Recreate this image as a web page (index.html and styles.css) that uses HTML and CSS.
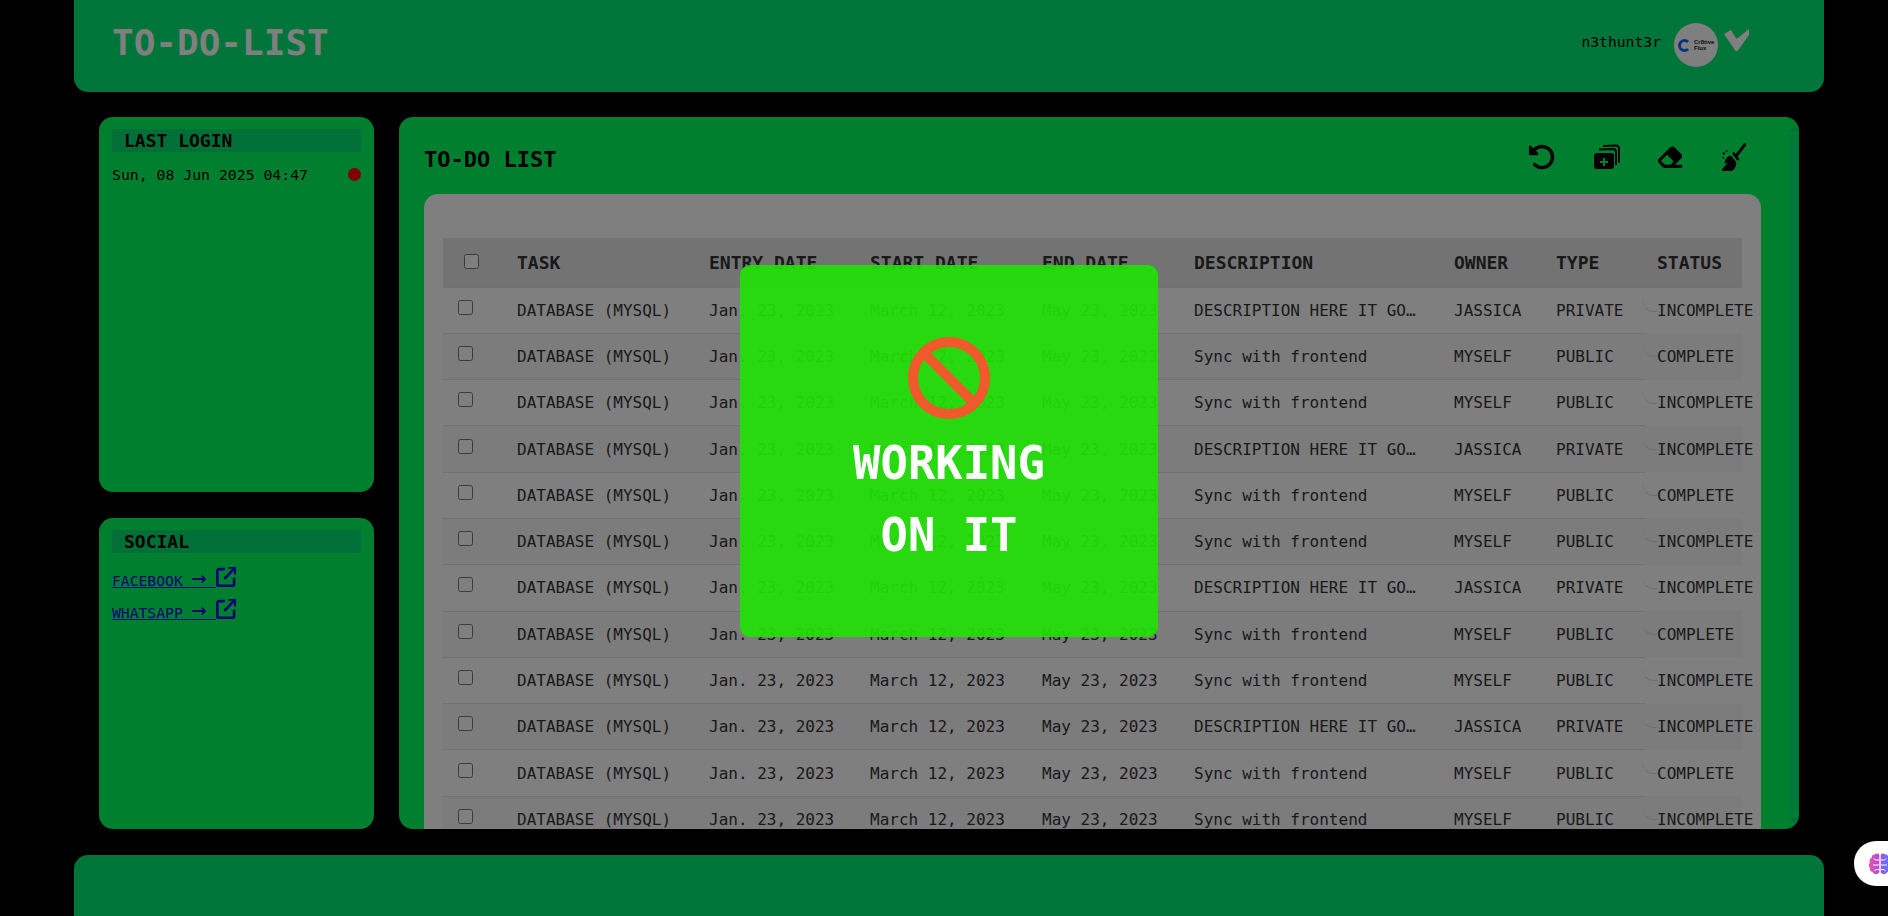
FILE: index.html
```html
<!DOCTYPE html>
<html lang="en">
<head>
    <meta charset="UTF-8">
    <meta name="viewport" content="width=device-width, initial-scale=1.0">
    <title>To-Do-List</title>
    <link rel="stylesheet" href="styles.css">
</head>
<body>

    <header class="topbar">
        <h1>TO-DO-LIST</h1>
        <div class="user">
            <span class="username">n3thunt3r</span>
            <div class="avatar">
                <span class="avatar-mark"></span>
                <span class="avatar-name">Cr8tive<br>Flux</span>
            </div>
            <svg class="chevron" viewBox="0 0 25 22"><polygon points="0,5 7,1 12.5,10 25,0 25,6 13.5,22 11.5,22"/></svg>
        </div>
    </header>

    <div class="content">
        <aside class="sidebar">
            <section class="card login-card">
                <h3>LAST LOGIN</h3>
                <div class="login-row">
                    <span>Sun, 08 Jun 2025 04:47</span>
                    <span class="dot"></span>
                </div>
            </section>
            <section class="card social-card">
                <h3>SOCIAL</h3>
                <a class="social-link" href="#">FACEBOOK <span class="link-arrow">&rarr;</span> <svg viewBox="1 1 18 18.500"><path d="M9 3H3.5A1.5 1.5 0 0 0 2 4.500V17a1.500 1.500 0 0 0 1.500 1.500H16a1.500 1.500 0 0 0 1.500-1.500V11M8.500 12L18 2M12 1.500h6.500V8"/></svg></a>
                <a class="social-link" href="#">WHATSAPP <span class="link-arrow">&rarr;</span> <svg viewBox="1 1 18 18.500"><path d="M9 3H3.5A1.5 1.5 0 0 0 2 4.500V17a1.500 1.500 0 0 0 1.500 1.500H16a1.500 1.500 0 0 0 1.500-1.500V11M8.500 12L18 2M12 1.500h6.500V8"/></svg></a>
            </section>
        </aside>

        <main class="main">
            <div class="main-body">
                <div class="toolbar">
                    <h2>TO-DO LIST</h2>
                    <div class="tools">
                        <svg viewBox="0 0 512 512"><path d="M48.500 224H40c-13.300 0-24-10.700-24-24V72c0-9.700 5.800-18.500 14.800-22.200s19.300-1.700 26.200 5.200L98.600 96.600c87.600-86.500 228.700-86.200 315.800 1c87.500 87.500 87.500 229.300 0 316.800s-229.300 87.500-316.800 0c-12.500-12.500-12.500-32.800 0-45.300s32.800-12.500 45.300 0c62.500 62.500 163.800 62.500 226.300 0s62.500-163.800 0-226.300c-62.200-62.200-162.700-62.500-225.300-1L185 183c6.900 6.900 8.900 17.200 5.200 26.200s-12.500 14.800-22.200 14.800H48.500z"/></svg>
                        <svg viewBox="0 0 28 28"><path fill-rule="evenodd" d="M5 10h14a3 3 0 0 1 3 3v10a3 3 0 0 1-3 3H5a3 3 0 0 1-3-3V13a3 3 0 0 1 3-3zm6 5v3H8v2h3v3h2v-3h3v-2h-3v-3z"/><path class="tool-line" d="M7 6.500 21 6a3 3 0 0 1 3 3v13M11 3l13-.5a3 3 0 0 1 3 3v14"/></svg>
                        <svg viewBox="0 0 576 512"><path d="M290.700 57.400L57.400 290.700c-25 25-25 65.500 0 90.500l80 80c12 12 28.300 18.700 45.300 18.700H288h9.400H512c17.700 0 32-14.300 32-32s-14.300-32-32-32H387.900L518.600 285.300c25-25 25-65.500 0-90.500L381.300 57.400c-25-25-65.500-25-90.500 0zM297.400 416H288l-105.400 0-80-80L227.300 211.300 364.700 348.700 297.400 416z"/></svg>
                        <svg class="broom" viewBox="0 0 576 512" preserveAspectRatio="none"><path d="M566.600 54.600c12.500-12.500 12.500-32.800 0-45.300s-32.800-12.500-45.300 0l-192 192-34.700-34.700c-4.200-4.200-10-6.600-16-6.600c-12.500 0-22.600 10.100-22.600 22.600v29.100L364.300 320h29.100c12.500 0 22.600-10.100 22.600-22.600c0-6-2.400-11.800-6.600-16l-34.700-34.700 192-192zM341.100 353.400L222.600 234.900c-42.700-3.700-85.200 11.700-115.800 42.300l-8 8C76.500 307.500 64 337.700 64 369.200c0 6.800 7.100 11.200 13.200 8.200l51.100-25.500c5-2.500 9.500 4.100 5.400 7.900L7.300 473.400C2.700 477.600 0 483.600 0 489.900C0 502.100 9.900 512 22.100 512l173.300 0c38.800 0 75.900-15.400 103.400-42.800c30.600-30.600 45.900-73.100 42.300-115.800z"/><circle cx="40" cy="190" r="24"/><circle cx="110" cy="150" r="20"/><circle cx="30" cy="270" r="18"/></svg>
                    </div>
                </div>

                <div class="table-panel">
                    <table>
                        <colgroup>
                            <col class="c-check"><col class="c-task"><col class="c-entry"><col class="c-start"><col class="c-end"><col class="c-desc"><col class="c-owner"><col class="c-type"><col class="c-status">
                        </colgroup>
                        <thead>
                            <tr>
                                <th><input type="checkbox" class="check-all"></th>
                                <th>TASK</th><th>ENTRY DATE</th><th>START DATE</th><th>END DATE</th><th>DESCRIPTION</th><th>OWNER</th><th>TYPE</th><th>STATUS</th>
                            </tr>
                        </thead>
                        <tbody>
                            <tr><td><input type="checkbox"></td><td>DATABASE (MYSQL)</td><td>Jan. 23, 2023</td><td>March 12, 2023</td><td>May 23, 2023</td><td>DESCRIPTION HERE IT GO…</td><td>JASSICA</td><td>PRIVATE</td><td class="status">INCOMPLETE</td></tr>
                            <tr><td><input type="checkbox"></td><td>DATABASE (MYSQL)</td><td>Jan. 23, 2023</td><td>March 12, 2023</td><td>May 23, 2023</td><td>Sync with frontend</td><td>MYSELF</td><td>PUBLIC</td><td class="status">COMPLETE</td></tr>
                            <tr><td><input type="checkbox"></td><td>DATABASE (MYSQL)</td><td>Jan. 23, 2023</td><td>March 12, 2023</td><td>May 23, 2023</td><td>Sync with frontend</td><td>MYSELF</td><td>PUBLIC</td><td class="status">INCOMPLETE</td></tr>
                            <tr><td><input type="checkbox"></td><td>DATABASE (MYSQL)</td><td>Jan. 23, 2023</td><td>March 12, 2023</td><td>May 23, 2023</td><td>DESCRIPTION HERE IT GO…</td><td>JASSICA</td><td>PRIVATE</td><td class="status">INCOMPLETE</td></tr>
                            <tr><td><input type="checkbox"></td><td>DATABASE (MYSQL)</td><td>Jan. 23, 2023</td><td>March 12, 2023</td><td>May 23, 2023</td><td>Sync with frontend</td><td>MYSELF</td><td>PUBLIC</td><td class="status">COMPLETE</td></tr>
                            <tr><td><input type="checkbox"></td><td>DATABASE (MYSQL)</td><td>Jan. 23, 2023</td><td>March 12, 2023</td><td>May 23, 2023</td><td>Sync with frontend</td><td>MYSELF</td><td>PUBLIC</td><td class="status">INCOMPLETE</td></tr>
                            <tr><td><input type="checkbox"></td><td>DATABASE (MYSQL)</td><td>Jan. 23, 2023</td><td>March 12, 2023</td><td>May 23, 2023</td><td>DESCRIPTION HERE IT GO…</td><td>JASSICA</td><td>PRIVATE</td><td class="status">INCOMPLETE</td></tr>
                            <tr><td><input type="checkbox"></td><td>DATABASE (MYSQL)</td><td>Jan. 23, 2023</td><td>March 12, 2023</td><td>May 23, 2023</td><td>Sync with frontend</td><td>MYSELF</td><td>PUBLIC</td><td class="status">COMPLETE</td></tr>
                            <tr><td><input type="checkbox"></td><td>DATABASE (MYSQL)</td><td>Jan. 23, 2023</td><td>March 12, 2023</td><td>May 23, 2023</td><td>Sync with frontend</td><td>MYSELF</td><td>PUBLIC</td><td class="status">INCOMPLETE</td></tr>
                            <tr><td><input type="checkbox"></td><td>DATABASE (MYSQL)</td><td>Jan. 23, 2023</td><td>March 12, 2023</td><td>May 23, 2023</td><td>DESCRIPTION HERE IT GO…</td><td>JASSICA</td><td>PRIVATE</td><td class="status">INCOMPLETE</td></tr>
                            <tr><td><input type="checkbox"></td><td>DATABASE (MYSQL)</td><td>Jan. 23, 2023</td><td>March 12, 2023</td><td>May 23, 2023</td><td>Sync with frontend</td><td>MYSELF</td><td>PUBLIC</td><td class="status">COMPLETE</td></tr>
                            <tr><td><input type="checkbox"></td><td>DATABASE (MYSQL)</td><td>Jan. 23, 2023</td><td>March 12, 2023</td><td>May 23, 2023</td><td>Sync with frontend</td><td>MYSELF</td><td>PUBLIC</td><td class="status">INCOMPLETE</td></tr>
                        </tbody>
                    </table>
                </div>
            </div>
            <div class="scrollbar">
                <span class="arrow-up"></span>
                <span class="thumb"></span>
                <span class="arrow-down"></span>
            </div>
        </main>
    </div>

    <footer class="bottombar"></footer>

    <!-- dim layer and the popup on top of it -->
    <div class="overlay"></div>
    <div class="popup">
        <svg class="no-icon" viewBox="0 0 82 82">
            <circle cx="41" cy="41" r="36"/>
            <line x1="16" y1="16" x2="66" y2="66"/>
        </svg>
        <p>WORKING<br>ON IT</p>
    </div>

    <div class="assistant">
        <svg viewBox="0 0 24 22">
            <defs>
                <linearGradient id="brainGrad" x1="0" y1="0" x2="1" y2="0">
                    <stop offset="0" stop-color="#f0569a"/>
                    <stop offset="0.5" stop-color="#a44ee8"/>
                    <stop offset="1" stop-color="#3f8cf5"/>
                </linearGradient>
            </defs>
            <path fill="url(#brainGrad)" d="M11.300 1.500C10 .3 7.800 .2 6.700 1.600 4.800 1.500 3.500 3 3.700 4.700 1.800 5.500 1 7.800 2 9.600.4 11 .4 13.600 2 15c-.6 2 .7 3.900 2.700 4 .8 2 3.300 2.800 5 1.700.7-.4 1.600-.9 1.600-1.700zM12.700 1.500c1.300-1.200 3.500-1.300 4.600.1 1.900-.1 3.200 1.400 3 3.100 1.900.8 2.700 3.100 1.700 4.900 1.600 1.400 1.600 4 0 5.400.6 2-.7 3.900-2.700 4-.8 2-3.300 2.800-5 1.700-.7-.4-1.600-.9-1.600-1.700z"/>
            <path class="brain-line" d="M11 7H7.500L6 5.500M11 12H5M11 16.500H8L6.500 18M13 7h3.500L18 5.500M13 12h6M13 16.500h3l1.500 1.500"/>
        </svg>
    </div>

</body>
</html>
```

FILE: styles.css
```css
* {
    box-sizing: border-box;
}

html, body {
    height: 100%;
}

body {
    margin: 0;
    overflow: hidden;
    background-color: #000;
    font-family: "DejaVu Sans Mono", monospace;
    color: #000;
}

/* top bar */
.topbar {
    height: 92px;
    margin: 0 64px 0 74px;
    padding: 0 75px 0 38px;
    display: flex;
    justify-content: space-between;
    align-items: center;
    background-color: #00ea74;
    border-radius: 0 0 14px 14px;
}

.topbar h1 {
    margin: 0 0 8px;
    font-size: 36px;
    font-weight: bold;
    color: #fff;
}

.user {
    display: flex;
    align-items: flex-start;
    height: 44px;
    margin-top: -2px;
}

.username {
    margin-top: 10px;
    margin-right: 13px;
    font-size: 14.7px;
}

.avatar {
    width: 44px;
    height: 44px;
    display: flex;
    align-items: center;
    gap: 3px;
    padding-left: 4px;
    background-color: #fff;
    border-radius: 50%;
}

.avatar-mark {
    flex: none;
    width: 13px;
    height: 13px;
    border: 3px solid #1466ff;
    border-right-color: transparent;
    border-radius: 50%;
}

.avatar-name {
    font-family: "Liberation Sans", sans-serif;
    font-size: 6px;
    font-weight: bold;
    line-height: 6px;
    color: #222;
}

.chevron {
    width: 25px;
    height: 22px;
    margin: 6px 0 0 6px;
    fill: #fff;
}

/* page columns */
.content {
    display: flex;
    gap: 25px;
    height: 712px;
    margin: 25px 0 26px 99px;
}

.sidebar {
    width: 275px;
    display: flex;
    flex-direction: column;
    gap: 26px;
}

.card {
    padding: 12px 13px;
    background-color: #00ff5e;
    border-radius: 14px;
}

.login-card {
    height: 375px;
}

.social-card {
    height: 311px;
}

.card h3 {
    height: 23px;
    margin: 0;
    padding-left: 12px;
    font-size: 18px;
    line-height: 23px;
    background-color: #00e070;
}

.login-row {
    display: flex;
    justify-content: space-between;
    align-items: center;
    margin-top: 14px;
    font-size: 14.8px;
}

.dot {
    width: 13px;
    height: 13px;
    background-color: #ff0000;
    border-radius: 50%;
}

.social-link {
    display: block;
    width: max-content;
    height: 32px;
    font-size: 14.7px;
    color: #0000ee;
}

.card h3 + .social-link {
    margin-top: 12px;
}

.link-arrow {
    font-size: 25px;
    line-height: 1;
}

.social-link svg {
    width: 20px;
    height: 20px;
    vertical-align: -1px;
    fill: none;
    stroke: #0000ee;
    stroke-width: 2.400;
}

/* main card */
.main {
    width: 1400px;
    display: flex;
    overflow: hidden;
    background-color: #00ff5e;
    border-radius: 14px;
}

.main-body {
    flex: 1;
    min-width: 0;
    padding: 0 28px 0 25px;
}

.toolbar {
    height: 77px;
    display: flex;
    justify-content: space-between;
    align-items: center;
}

.toolbar h2 {
    margin: 8px 0 0;
    font-size: 22px;
}

.tools {
    display: flex;
    align-items: center;
    gap: 36px;
    padding-right: 14px;
    margin-top: 2px;
}

.tools svg {
    width: 28px;
    height: 28px;
}

.tools .broom {
    width: 24px;
    margin: 0 1px 0 2px;
}

.tool-line {
    fill: none;
    stroke: #000;
    stroke-width: 2;
}

.scrollbar {
    width: 10px;
    display: flex;
    flex-direction: column;
    align-items: center;
    padding: 8px 0 6px;
    gap: 4px;
}

.thumb {
    flex: 1;
    width: 100%;
    background-color: #00f074;
    border-radius: 4px;
}

.arrow-up, .arrow-down {
    width: 0;
    height: 0;
    border-left: 5px solid transparent;
    border-right: 5px solid transparent;
}

.arrow-up {
    border-bottom: 6px solid #00e070;
}

.arrow-down {
    border-top: 6px solid #00e070;
}

/* table */
.table-panel {
    height: 640px;
    padding: 44px 19px 0;
    overflow: hidden;
    background-color: #fff;
    border-radius: 14px 14px 0 0;
}

table {
    width: 1299px;
    table-layout: fixed;
    border-collapse: collapse;
    font-size: 16px;
    color: #333;
}

.c-check { width: 62px; }
.c-task { width: 192px; }
.c-entry { width: 161px; }
.c-start { width: 172px; }
.c-end { width: 152px; }
.c-desc { width: 260px; }
.c-owner { width: 102px; }
.c-type { width: 101px; }
.c-status { width: 97px; }

th, td {
    padding: 0 12px;
    text-align: left;
    white-space: nowrap;
    border-bottom: 1px solid #dee2e6;
}

th {
    height: 49px;
    background-color: #e6e6e6;
    font-size: 18px;
    font-weight: bold;
}

td {
    height: 46.3px;
}

tbody tr:nth-child(even) {
    background-color: #f9f9f9;
}

input[type="checkbox"] {
    width: 15px;
    height: 15px;
    margin: 0 0 6px 3px;
    vertical-align: middle;
}

.check-all {
    margin: 0 0 4px 9px !important;
}

.status {
    position: relative;
    border-bottom: none;
}

/* small curved line in front of the status text */
.status::before {
    content: "";
    position: absolute;
    left: -3px;
    top: 12px;
    width: 15px;
    height: 11px;
    border-bottom: 1px solid #dcdcdc;
    border-left: 1px solid #f2f2f2;
    border-radius: 0 0 0 14px;
}

/* bottom bar */
.bottombar {
    height: 100px;
    margin: 0 64px 0 74px;
    background-color: #00ea74;
    border-radius: 14px 14px 0 0;
}

/* dim layer + popup */
.overlay {
    position: fixed;
    inset: 0;
    background-color: rgba(0, 0, 0, 0.5);
}

.popup {
    position: fixed;
    left: 740px;
    top: 265px;
    width: 418px;
    height: 372px;
    padding-top: 72px;
    text-align: center;
    background-color: rgba(33, 225, 5, 0.92);
    border-radius: 10px;
}

.no-icon {
    display: block;
    width: 82px;
    height: 82px;
    margin: 0 auto;
    filter: blur(0.6px);
    fill: none;
    stroke: #f0592b;
    stroke-width: 10;
}

.popup p {
    margin: 9px 0 0;
    font-size: 45.500px;
    font-weight: bold;
    line-height: 71.500px;
    color: #fff;
}

.assistant {
    position: fixed;
    right: 0;
    top: 841px;
    width: 34px;
    height: 45px;
    padding: 12px 0 0 14px;
    overflow: hidden;
    background-color: #fff;
    border-radius: 22px 0 0 22px;
}

.assistant svg {
    display: block;
    width: 24px;
    height: 22px;
}

.brain-line {
    fill: none;
    stroke: #fff;
    stroke-width: 1;
}
```
